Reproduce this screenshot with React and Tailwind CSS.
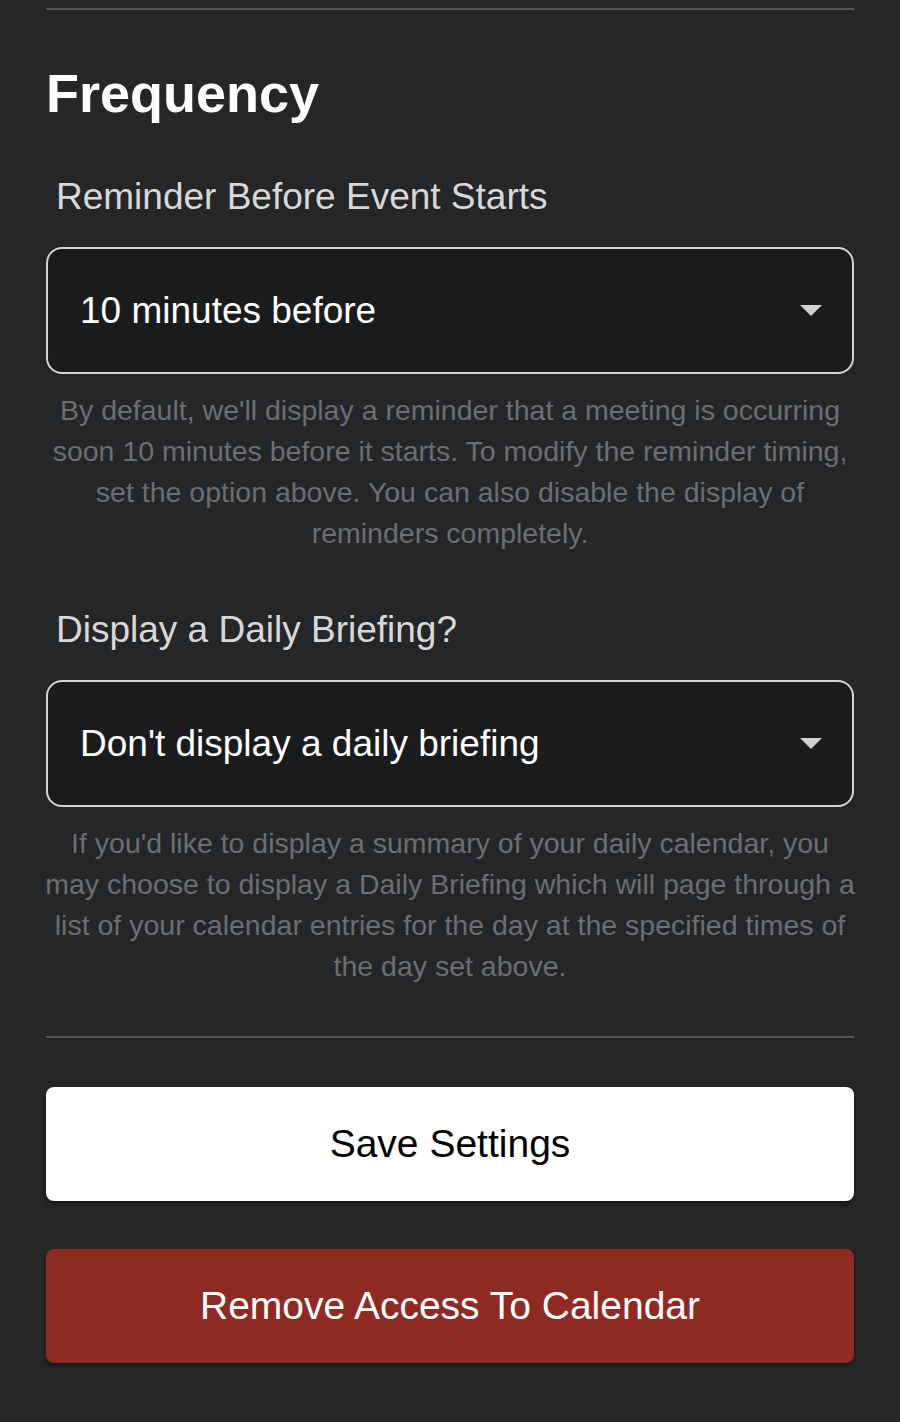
import React, { useState } from 'react';

const font = { fontFamily: '"Liberation Sans", Arial, sans-serif' };

function Caret() {
    return (
        <svg width="22" height="11" viewBox="0 0 22 11" className="shrink-0">
            <path d="M0 0 L22 0 L11 11 Z" fill="#d2d2d2" />
        </svg>
    );
}

function SelectBox({ value }) {
    return (
        <div className="mt-7 h-[127px] rounded-[16px] border-2 border-[#d4d4d4] bg-[#1a1b1d] flex items-center justify-between pl-8 pr-[30px]">
            <span className="text-[37px] leading-[44px] text-white">{value}</span>
            <Caret />
        </div>
    );
}

function HelpText({ children }) {
    return (
        <p className="mt-4 -mx-1 text-center text-[28.5px] leading-[41px] text-[#6b6e72]">
            {children}
        </p>
    );
}

export default function App() {
    const [reminder] = useState('10 minutes before');
    const [briefing] = useState("Don't display a daily briefing");

    return (
        <div className="min-h-screen bg-[#252628] px-[46px] pt-2 pb-14" style={font}>
            <div className="h-[2px] bg-[#515357]" />

            <h1 className="mt-14 text-[54px] leading-[54px] font-bold text-white">Frequency</h1>

            {/* Reminder */}
            <div className="mt-[55px] pl-[10px] text-[37px] leading-[44px] text-[#d8d8d8]">
                Reminder Before Event Starts
            </div>
            <SelectBox value={reminder} />
            <HelpText>
                By default, we'll display a reminder that a meeting is occurring soon 10 minutes before it
                starts. To modify the reminder timing, set the option above. You can also disable the display
                of reminders completely.
            </HelpText>

            {/* Daily briefing */}
            <div className="mt-[54px] pl-[10px] text-[37px] leading-[44px] text-[#d8d8d8]">
                Display a Daily Briefing?
            </div>
            <SelectBox value={briefing} />
            <HelpText>
                If you'd like to display a summary of your daily calendar, you may choose to display a Daily
                Briefing which will page through a list of your calendar entries for the day at the specified
                times of the day set above.
            </HelpText>

            <div className="mt-[49px] h-[2px] bg-[#515357]" />

            <button className="mt-[49px] w-full h-[114px] rounded-lg bg-white text-[39px] text-black shadow-[0_3px_4px_rgba(0,0,0,0.45)]">
                Save Settings
            </button>
            <button className="mt-12 w-full h-[114px] rounded-lg bg-[#8f2a22] text-[39px] text-white shadow-[0_3px_4px_rgba(0,0,0,0.45)]">
                Remove Access To Calendar
            </button>
        </div>
    );
}
